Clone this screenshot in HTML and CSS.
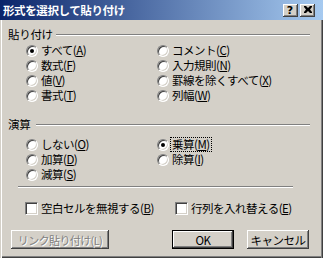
FILE: index.html
```html
<!DOCTYPE html>
<html lang="ja">
<head>
<meta charset="utf-8">
<title>形式を選択して貼り付け</title>
<link rel="stylesheet" href="styles.css">
</head>
<body>
<div class="window">
  <div class="titlebar">
    <span class="title">形式を選択して貼り付け</span>
    <div class="caption-btns">
      <span class="cbtn help">?</span>
      <span class="cbtn close"><svg width="8" height="7" viewBox="0 0 8 7"><path d="M0 0h2l2 2 2-2h2v1L6 3.5 8 6v1H6L4 5 2 7H0V6l2-2.5L0 1z" fill="#000"/></svg></span>
    </div>
  </div>
  <div class="client">
    <div class="group-head head-paste"><span class="label">貼り付け</span><span class="etch"></span></div>
    <div class="radio-grid grid-paste">
      <label class="opt"><span class="radio checked"></span><span class="txt">すべて(<u>A</u>)</span></label>
      <label class="opt"><span class="radio"></span><span class="txt">数式(<u>F</u>)</span></label>
      <label class="opt"><span class="radio"></span><span class="txt">値(<u>V</u>)</span></label>
      <label class="opt"><span class="radio"></span><span class="txt">書式(<u>T</u>)</span></label>
      <label class="opt"><span class="radio"></span><span class="txt">コメント(<u>C</u>)</span></label>
      <label class="opt"><span class="radio"></span><span class="txt">入力規則(<u>N</u>)</span></label>
      <label class="opt"><span class="radio"></span><span class="txt">罫線を除くすべて(<u>X</u>)</span></label>
      <label class="opt"><span class="radio"></span><span class="txt">列幅(<u>W</u>)</span></label>
    </div>
    <div class="group-head head-op"><span class="label">演算</span><span class="etch"></span></div>
    <div class="radio-grid grid-op">
      <label class="opt"><span class="radio"></span><span class="txt">しない(<u>O</u>)</span></label>
      <label class="opt"><span class="radio"></span><span class="txt">加算(<u>D</u>)</span></label>
      <label class="opt"><span class="radio"></span><span class="txt">減算(<u>S</u>)</span></label>
      <label class="opt"><span class="radio checked"></span><span class="txt focus">乗算(<u>M</u>)</span></label>
      <label class="opt"><span class="radio"></span><span class="txt">除算(<u>I</u>)</span></label>
    </div>
    <div class="sep"></div>
    <div class="checks">
      <label class="chk-item first"><span class="checkbox"></span><span class="txt">空白セルを無視する(<u>B</u>)</span></label>
      <label class="chk-item"><span class="checkbox"></span><span class="txt">行列を入れ替える(<u>E</u>)</span></label>
    </div>
    <div class="buttons">
      <span class="btn link disabled">リンク貼り付け(L)</span>
      <span class="btn ok default">OK</span>
      <span class="btn cancel">キャンセル</span>
    </div>
  </div>
</div>
</body>
</html>
```
FILE: styles.css
```css
html, body {
  margin: 0;
  padding: 0;
  background: #D4D0C8;
}
body {
  font-family: "Noto Sans CJK JP", "DejaVu Sans", sans-serif;
  font-size: 11.5px;
  color: #000;
}
.window {
  width: 323px;
  height: 258px;
  display: flex;
  flex-direction: column;
  background: #D4D0C8;
  overflow: hidden;
}
.titlebar {
  height: 20px;
  flex: none;
  display: flex;
  align-items: center;
  padding-left: 3px;
  background: linear-gradient(to right, #0A246A, #A6CAF0);
  color: #fff;
}
.title {
  font-weight: bold;
  font-size: 11.5px;
  letter-spacing: -0.4px;
  line-height: 20px;
  flex: 1;
  white-space: nowrap;
}
.caption-btns {
  display: flex;
  gap: 2px;
  margin-right: 8px;
}
.cbtn {
  width: 15px;
  height: 13px;
  box-sizing: border-box;
  background: #D4D0C8;
  box-shadow: inset -1px -1px 0 #404040, inset 1px 1px 0 #fff, inset -2px -2px 0 #808080;
  display: flex;
  align-items: center;
  justify-content: center;
  color: #000;
}
.help {
  font-family: "DejaVu Sans", sans-serif;
  font-weight: bold;
  font-size: 11px;
  line-height: 13px;
  padding-right: 1px;
}
.close svg { display: block; margin-top: -1px; }
.client {
  flex: 1;
  display: flex;
  flex-direction: column;
  box-shadow: inset 1px 0 0 #D4D0C8, inset 2px 0 0 #fff,
              inset -1px 0 0 #404040, inset -2px 0 0 #808080,
              inset 0 -1px 0 #404040, inset 0 -2px 0 #808080;
}
.group-head {
  height: 13px;
  display: flex;
  align-items: center;
  padding-left: 8px;
  margin-right: 13px;
}
.head-paste { margin-top: 8px; }
.head-op { margin-top: 15px; }
.label {
  line-height: 13px;
  white-space: nowrap;
  letter-spacing: -0.3px;
}
.etch {
  flex: 1;
  height: 0;
  border-top: 1px solid #808080;
  border-bottom: 1px solid #fff;
  margin-left: 3px;
}
.head-op .etch { margin-left: 6px; }
.radio-grid {
  display: grid;
  grid-auto-flow: column;
  grid-template-columns: 131px 1fr;
  padding-left: 26px;
}
.grid-paste {
  margin-top: 2px;
  grid-template-rows: repeat(4, 15px);
}
.grid-op {
  margin-top: 6px;
  grid-template-rows: repeat(3, 15px);
}
.opt {
  display: flex;
  align-items: center;
  height: 15px;
  white-space: nowrap;
}
.txt {
  line-height: 13px;
  letter-spacing: -0.5px;
}
.opt .txt { margin-left: 3px; }
.radio {
  position: relative;
  width: 12px;
  height: 12px;
  flex: none;
  box-sizing: border-box;
  border-radius: 50%;
  background: #fff;
  border: 1px solid;
  border-color: #808080 #fff #fff #808080;
  box-shadow: inset 1px 1px 0 #404040, inset -1px -1px 0 #D4D0C8;
}
.radio.checked::after {
  content: "";
  position: absolute;
  left: 3px;
  top: 3px;
  width: 4px;
  height: 4px;
  border-radius: 50%;
  background: #000;
}
.focus {
  outline: 1px dotted #000;
  outline-offset: 0;
  padding: 0 1px;
  margin-left: 2px !important;
}
.sep {
  margin: 4px 0 0 18px;
  width: 275px;
  height: 0;
  border-top: 1px solid #808080;
  border-bottom: 1px solid #fff;
}
.checks {
  margin-top: 14px;
  display: flex;
  padding-left: 25px;
  height: 13px;
}
.chk-item {
  display: flex;
  align-items: center;
  white-space: nowrap;
}
.chk-item.first { width: 150px; }
.chk-item .txt { margin-left: 3px; }
.checkbox {
  width: 13px;
  height: 13px;
  flex: none;
  box-sizing: border-box;
  background: #fff;
  border: 1px solid;
  border-color: #808080 #fff #fff #808080;
  box-shadow: inset 1px 1px 0 #404040, inset -1px -1px 0 #D4D0C8;
}
.buttons {
  margin-top: 15px;
  display: flex;
  padding-left: 11px;
}
.btn {
  height: 19px;
  box-sizing: border-box;
  display: flex;
  align-items: center;
  justify-content: center;
  background: #D4D0C8;
  box-shadow: inset -1px -1px 0 #404040, inset 1px 1px 0 #fff, inset -2px -2px 0 #808080;
  white-space: nowrap;
  letter-spacing: -0.5px;
}
.link { width: 98px; font-size: 11px; letter-spacing: -0.6px; }
.ok { width: 62px; margin-left: 63px; }
.cancel { width: 62px; margin-left: 13px; }
.default {
  border: 1px solid #000;
  box-shadow: inset -1px -1px 0 #404040, inset 1px 1px 0 #fff, inset -2px -2px 0 #808080;
}
.disabled {
  color: #808080;
  text-shadow: 1px 1px 0 #fff;
}
```
